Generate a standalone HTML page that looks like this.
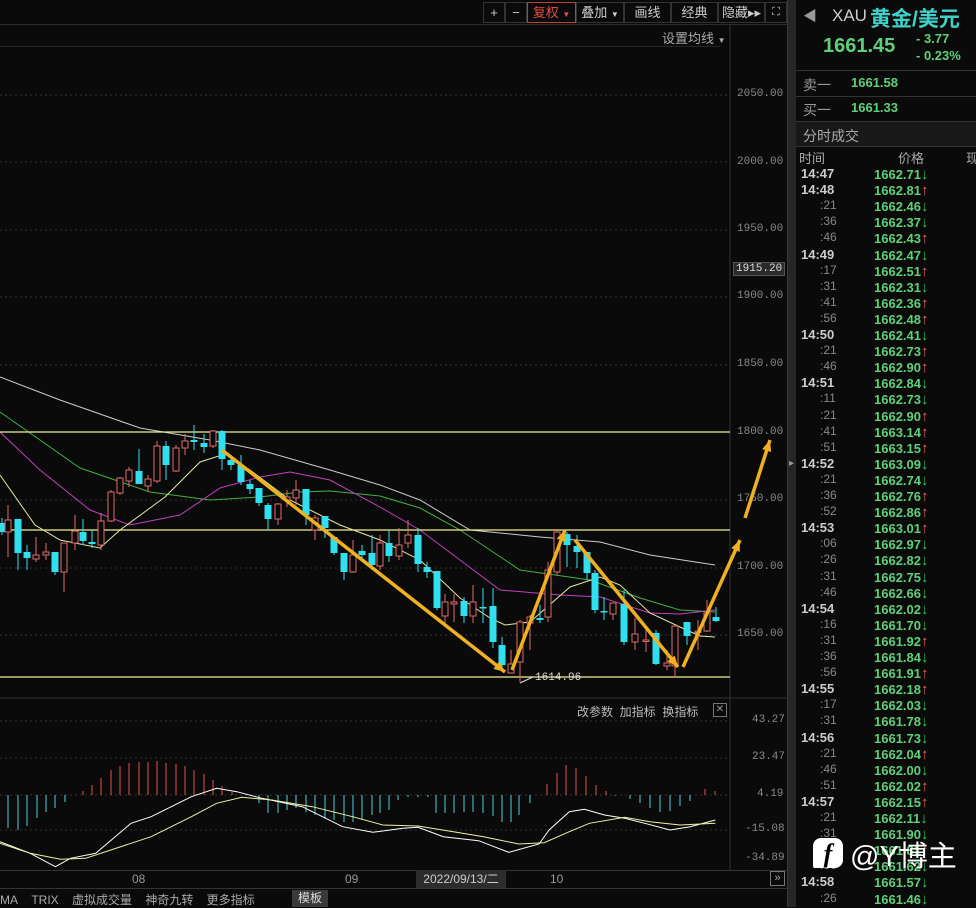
<!DOCTYPE html>
<html><head><meta charset="utf-8">
<style>
*{margin:0;padding:0;box-sizing:border-box}
body{width:976px;height:907px;background:#0a0a0a;overflow:hidden;position:relative;font-family:"Liberation Sans","Noto Sans CJK SC",sans-serif;color:#bbb}
.a{position:absolute;white-space:nowrap}
.btn{position:absolute;top:2px;height:21px;border:1px solid #333;font-size:13px;color:#ccc;text-align:center;line-height:19px}
.ax{position:absolute;left:737px;font-size:11px;color:#888;font-family:"Liberation Mono",monospace}
.row{position:absolute;left:796px;height:16px;width:180px;font-size:13px;font-weight:bold}
.row .t{position:absolute;left:5px;color:#ccc}
.row .s{position:absolute;left:20px;color:#888;font-weight:normal;font-size:12px}
.row .p{position:absolute;left:78px;color:#5fd07a}
.up{color:#f06060;font-size:15px;font-weight:900}.dn{color:#40c060;font-size:15px;font-weight:900}
</style></head><body>
<div class="a" style="left:0;top:24px;width:787px;height:1px;background:#2c2c2c"></div>
<div class="a" style="left:0;top:46px;width:720px;height:1px;background:#262626"></div>
<div class="btn" style="left:483px;width:22px">+</div>
<div class="btn" style="left:505px;width:22px">−</div>
<div class="btn" style="left:527px;width:49px;border-color:#c04030;color:#e05040">复权 <span style="font-size:8px">▼</span></div>
<div class="btn" style="left:576px;width:48px">叠加 <span style="font-size:8px">▼</span></div>
<div class="btn" style="left:624px;width:47px">画线</div>
<div class="btn" style="left:671px;width:47px">经典</div>
<div class="btn" style="left:718px;width:47px">隐藏▸▸</div>
<div class="btn" style="left:765px;width:22px;font-size:11px">⛶</div>
<div class="a" style="left:662px;top:28px;font-size:13px;color:#aaa">设置均线 <span style="font-size:8px">▼</span></div>
<div class="ax" style="top:88px">2050.00</div>
<div class="ax" style="top:156px">2000.00</div>
<div class="ax" style="top:223px">1950.00</div>
<div class="ax" style="top:290px">1900.00</div>
<div class="ax" style="top:358px">1850.00</div>
<div class="ax" style="top:426px">1800.00</div>
<div class="ax" style="top:493px">1750.00</div>
<div class="ax" style="top:561px">1700.00</div>
<div class="ax" style="top:628px">1650.00</div>
<div class="ax" style="top:262px;left:733px;background:#2a2a2a;color:#ddd;padding:0 2px;border:1px solid #555">1915.20</div>
<div class="ax" style="top:714px;left:752px">43.27</div>
<div class="ax" style="top:751px;left:752px">23.47</div>
<div class="ax" style="top:788px;left:757px">4.19</div>
<div class="ax" style="top:823px;left:745px">-15.08</div>
<div class="ax" style="top:852px;left:745px">-34.89</div>
<div class="a" style="left:577px;top:703px;font-size:12px;color:#bbb">改参数&nbsp; 加指标&nbsp; 换指标</div>
<div class="a" style="left:713px;top:703px;width:14px;height:14px;border:1px solid #777;font-size:10px;color:#999;text-align:center;line-height:12px">✕</div>
<svg class="a" id="ch" style="left:0;top:0" width="787" height="907"></svg>
<div class="a" style="left:0;top:870px;width:787px;height:1px;background:#333"></div>
<div class="a" style="left:132px;top:872px;font-size:12px;color:#999">08</div>
<div class="a" style="left:345px;top:872px;font-size:12px;color:#999">09</div>
<div class="a" style="left:416px;top:870px;width:90px;height:18px;background:#2c2c2c;font-size:12px;color:#ccc;text-align:center;line-height:18px">2022/09/13/二</div>
<div class="a" style="left:550px;top:872px;font-size:12px;color:#999">10</div>
<div class="a" style="left:770px;top:871px;width:15px;height:15px;border:1px solid #777;font-size:11px;color:#aaa;text-align:center;line-height:13px">»</div>
<div class="a" style="left:0;top:888px;width:787px;height:1px;background:#333"></div>
<div class="a" style="left:0;top:891px;font-size:12px;color:#aaa">MA&nbsp;&nbsp;&nbsp;&nbsp;TRIX&nbsp;&nbsp;&nbsp;&nbsp;虚拟成交量&nbsp;&nbsp;&nbsp; 神奇九转&nbsp;&nbsp;&nbsp; 更多指标</div>
<div class="a" style="left:292px;top:890px;width:36px;height:17px;background:#3a3a3a;font-size:12px;color:#ddd;text-align:center;line-height:17px">模板</div>
<div class="a" style="left:787px;top:0;width:9px;height:907px;background:#262626;border-left:1px solid #3a3a3a"></div>
<div class="a" style="left:789px;top:458px;font-size:10px;color:#999">▸</div>
<div class="a" style="left:803px;top:6px;font-size:14px;color:#999">◀</div>
<div class="a" style="left:832px;top:6px;font-size:17px;color:#ccc">XAU</div>
<div class="a" style="left:870px;top:3px;font-size:21px;font-weight:bold;color:#40d0c8">黄金/美元</div>
<div class="a" style="left:823px;top:35px;font-size:20px;font-weight:bold;color:#5fd07a">1661.45</div>
<div class="a" style="left:916px;top:31px;font-size:13px;font-weight:bold;color:#5fd07a">- 3.77</div>
<div class="a" style="left:916px;top:48px;font-size:13px;font-weight:bold;color:#5fd07a">- 0.23%</div>
<div class="a" style="left:796px;top:70px;width:180px;height:1px;background:#333"></div>
<div class="a" style="left:803px;top:75px;font-size:14px;color:#999">卖一</div>
<div class="a" style="left:851px;top:75px;font-size:13px;font-weight:bold;color:#5fd07a">1661.58</div>
<div class="a" style="left:796px;top:96px;width:180px;height:1px;background:#333"></div>
<div class="a" style="left:803px;top:100px;font-size:14px;color:#999">买一</div>
<div class="a" style="left:851px;top:100px;font-size:13px;font-weight:bold;color:#5fd07a">1661.33</div>
<div class="a" style="left:796px;top:121px;width:180px;height:26px;background:#181818;border-top:1px solid #333;border-bottom:1px solid #333"></div>
<div class="a" style="left:803px;top:126px;font-size:14px;color:#aaa">分时成交</div>
<div class="a" style="left:799px;top:148px;font-size:13px;color:#aaa">时间</div>
<div class="a" style="left:898px;top:148px;font-size:13px;color:#aaa">价格</div>
<div class="a" style="left:966px;top:148px;font-size:13px;color:#aaa">现</div>
<div id="list"></div>
<div class="a" style="left:813px;top:838px;width:30px;height:30px;background:#fff;border-radius:8px 8px 8px 2px;color:#000;font-weight:bold;font-size:26px;text-align:center;line-height:32px;font-family:'Liberation Serif',serif;font-style:italic">f</div>
<div class="a" style="left:850px;top:833px;font-size:29px;color:#fff">@Y博主</div>
<script>
var NS="http://www.w3.org/2000/svg",s=document.getElementById('ch');
function el(t,a){var e=document.createElementNS(NS,t);for(var k in a)e.setAttribute(k,a[k]);s.appendChild(e);return e}
[95,162,230,297,365,432,500,568,635].forEach(function(y){el('line',{x1:0,y1:y,x2:730,y2:y,stroke:'#333','stroke-dasharray':'2,3'})});
[721,758,795,830].forEach(function(y){el('line',{x1:0,y1:y,x2:730,y2:y,stroke:'#333','stroke-dasharray':'2,3'})});
el('line',{x1:730,y1:25,x2:730,y2:870,stroke:'#333'});
el('line',{x1:0,y1:698,x2:787,y2:698,stroke:'#333'});
function pl(p,c,w){el('polyline',{points:p,fill:'none',stroke:c,'stroke-width':w||1})}
pl("0,377 60,400 140,428 210,440 260,450 330,470 380,485 420,500 470,530 540,537 600,542 650,555 715,565","#ccc");
pl("0,412 40,440 80,468 150,492 210,500 260,497 300,492 330,491 380,496 420,508 460,530 520,570 590,580 640,598 680,610 715,612","#40b040");
pl("0,432 40,470 90,510 130,525 180,515 220,488 260,477 290,472 330,480 380,507 420,530 460,560 500,590 560,595 600,597 650,613 680,614 715,610","#c040c0");
pl("0,475 35,525 60,540 100,548 120,530 165,497 200,462 225,454 250,470 290,500 340,525 380,540 420,560 460,598 490,618 505,625 530,622 570,587 600,577 620,585 650,613 680,627 700,636 715,637","#e8e8a0");
[432,530,677].forEach(function(y){el('line',{x1:0,y1:y,x2:730,y2:y,stroke:'#f0f090','stroke-width':1.3})});
var C=[[2,'c',523,532,518,535],[8,'r',520,532,505,557],[18,'c',519,553,519,570],[27,'c',552,558,545,570],[36,'r',555,559,537,562],[46,'r',552,555,543,560],[55,'c',552,572,552,575],[64,'r',543,572,543,592],[75,'r',531,543,515,550],[83,'c',532,541,519,545],[92,'c',542,544,530,548],[101,'r',521,545,513,550],[111,'r',492,521,490,522],[120,'r',478,493,477,495],[129,'r',470,481,467,487],[139,'c',471,484,449,484],[148,'r',479,486,475,492],[157,'r',446,481,441,483],[166,'c',446,465,441,480],[176,'r',448,471,445,472],[185,'r',441,448,434,455],[194,'c',440,442,425,450],[204,'c',443,447,434,453],[213,'r',431,446,430,448],[222,'c',431,459,430,470],[231,'c',460,465,455,470],[241,'c',465,482,455,485],[250,'c',484,489,480,494],[259,'c',488,503,488,506],[268,'c',505,519,503,530],[278,'r',504,519,503,525],[287,'r',497,500,490,507],[296,'r',490,498,480,505],[306,'c',489,515,489,525],[315,'r',518,530,515,540],[325,'c',516,528,516,538],[334,'c',537,553,537,555],[344,'c',553,572,553,580],[353,'r',555,572,540,573],[362,'c',551,555,545,560],[372,'c',553,565,535,570],[380,'r',543,566,535,570],[389,'c',543,556,530,562],[399,'r',545,556,528,560],[408,'r',535,543,520,548],[418,'c',535,564,528,572],[427,'c',567,572,562,578],[437,'c',571,608,571,610],[445,'r',602,616,594,625],[454,'r',602,604,594,622],[464,'c',601,616,597,623],[473,'r',602,616,585,623],[483,'c',607,608,588,623],[493,'c',606,642,588,648],[502,'c',645,665,637,668],[511,'r',664,673,650,673],[520,'r',622,662,620,682],[530,'r',617,623,615,650],[540,'c',618,620,605,623],[548,'r',570,617,562,622],[557,'r',532,572,530,575],[567,'c',534,545,532,567],[577,'c',546,552,535,568],[587,'c',552,573,552,580],[595,'c',573,610,570,613],[604,'c',611,612,597,620],[613,'r',603,614,603,620],[624,'c',604,642,590,645],[635,'r',634,642,618,650],[646,'r',640,641,625,652],[656,'c',633,664,630,665],[667,'r',663,666,650,670],[675,'r',626,666,626,678],[687,'c',622,636,622,645],[698,'r',631,632,620,650],[707,'r',612,631,600,632],[716,'c',617,621,607,622]];
C.forEach(function(k){var x=k[0],col=k[1]=='c'?'#30e0f0':'#e06a6a';
el('line',{x1:x,y1:k[4],x2:x,y2:k[5],stroke:col});
var h=Math.max(1.5,k[3]-k[2]);
if(k[1]=='c')el('rect',{x:x-3.5,y:k[2],width:7,height:h,fill:col});
else el('rect',{x:x-3,y:k[2],width:6,height:h,fill:'#0a0a0a',stroke:col});});
var or='#f0b020';
function ar(x1,y1,x2,y2,head){el('line',{x1:x1,y1:y1,x2:x2,y2:y2,stroke:or,'stroke-width':3.5});
if(head){var a=Math.atan2(y2-y1,x2-x1),L=12;el('polygon',{points:x2+','+y2+' '+(x2-L*Math.cos(a-0.4))+','+(y2-L*Math.sin(a-0.4))+' '+(x2-L*Math.cos(a+0.4))+','+(y2-L*Math.sin(a+0.4)),fill:or})}}
ar(222,450,505,672,true);ar(512,670,565,530,true);ar(575,540,678,667,true);ar(683,667,740,540,true);ar(745,518,770,440,true);
el('text',{x:535,y:680,fill:'#ddd','font-size':11,'font-family':'Liberation Mono, monospace'}).textContent='1614.96';
el('line',{x1:533,y1:677,x2:520,y2:683,stroke:'#ddd'});
function bar(x,y,c){el('line',{x1:x,y1:795,x2:x,y2:y,stroke:c})}
var cy='#50d0d8',rd='#e05050';
[[8,828],[18,830],[27,826],[37,818],[46,812],[55,808],[65,802]].forEach(function(b){bar(b[0],b[1],cy)});
[[83,791],[92,785],[101,778],[111,770],[120,766],[129,763],[139,762],[148,762],[157,761],[166,763],[176,764],[185,766],[194,770],[204,774],[213,780],[222,786],[232,792]].forEach(function(b){bar(b[0],b[1],rd)});
[[259,803],[268,813],[278,813],[287,810],[296,808],[306,812],[315,815],[325,818],[334,820],[344,822],[353,822],[362,820],[372,815],[380,813],[389,810],[398,800],[408,797],[418,797],[428,797],[436,813],[445,813],[454,813],[464,812],[473,812],[483,813],[493,816],[502,822],[511,822],[519,815],[530,803]].forEach(function(b){bar(b[0],b[1],cy)});
[[547,784],[557,773],[566,765],[576,768],[586,776],[596,785],[606,791],[615,796]].forEach(function(b){bar(b[0],b[1],rd)});
[[630,799],[640,803],[650,808],[660,812],[670,811],[680,806],[690,801]].forEach(function(b){bar(b[0],b[1],cy)});
bar(705,789,rd);bar(715,791,rd);
function cv(a){return a.map(function(p){return (p[0]/1.985).toFixed(1)+','+(p[1]/3+690).toFixed(1)}).join(' ')}
pl(cv([[0,455],[60,490],[110,530],[140,505],[190,490],[260,400],[300,380],[380,320],[430,295],[470,305],[520,325],[600,350],[680,410],[740,427],[800,415],[830,412],[880,440],[950,452],[1010,487],[1070,462],[1090,420],[1130,365],[1160,358],[1200,375],[1240,385],[1280,400],[1330,420],[1370,410],[1420,390]]),'#fff');
pl(cv([[0,460],[60,490],[120,508],[170,505],[220,480],[300,440],[380,380],[430,340],[480,322],[540,330],[620,350],[700,380],[760,405],[830,408],[900,425],[960,440],[1030,462],[1080,458],[1130,425],[1170,400],[1240,382],[1290,395],[1350,405],[1420,400]]),'#f0f0a0');
var R=[['14:47','2.71',0],['14:48','2.81',1],[':21','2.46',0],[':36','2.37',0],[':46','2.43',1],['14:49','2.47',0],[':17','2.51',1],[':31','2.31',0],[':41','2.36',1],[':56','2.48',1],['14:50','2.41',0],[':21','2.73',1],[':46','2.90',1],['14:51','2.84',0],[':11','2.73',0],[':21','2.90',1],[':41','3.14',1],[':51','3.15',1],['14:52','3.09',0],[':21','2.74',0],[':36','2.76',1],[':52','2.86',1],['14:53','3.01',1],[':06','2.97',0],[':26','2.82',0],[':31','2.75',0],[':46','2.66',0],['14:54','2.02',0],[':16','1.70',0],[':31','1.92',1],[':36','1.84',0],[':56','1.91',1],['14:55','2.18',1],[':17','2.03',0],[':31','1.78',0],['14:56','1.73',0],[':21','2.04',1],[':46','2.00',0],[':51','2.02',1],['14:57','2.15',1],[':21','2.11',0],[':31','1.90',0],[':41','1.81',1],[':56','1.62',0],['14:58','1.57',0],[':26','1.46',0]];
var h='';R.forEach(function(r,i){var y=166+i*16.1;var big=r[0].length>3;
h+='<div class="row" style="top:'+y.toFixed(1)+'px"><span class="'+(big?'t':'s')+'" style="'+(big?'':'left:24px')+'">'+r[0]+'</span><span class="p">166'+r[1]+'<span class="'+(r[2]?'up':'dn')+'">'+(r[2]?'↑':'↓')+'</span></span></div>'});
document.getElementById('list').innerHTML=h;
</script>
</body></html>
